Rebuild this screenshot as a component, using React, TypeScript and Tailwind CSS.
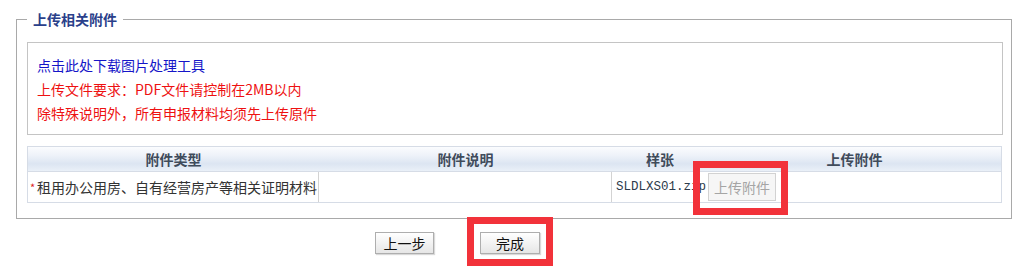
import React from "react";

export default function App() {
  const cjk = { fontFamily: '"Noto Sans CJK SC", "Liberation Sans", sans-serif' } as React.CSSProperties;
  return (
    <div className="relative w-[1022px] h-[277px] bg-white overflow-hidden" style={cjk}>
      <fieldset className="ml-[16px] mt-[9px] w-[996px] border border-[#a9a9a9] pl-[10px] pr-[8px] pt-[13px] pb-[15px]">
        <legend className="px-[6px] ml-[0px] text-[14px] leading-[20px] font-bold text-[#2a3f8a]">上传相关附件</legend>
        <div className="border border-[#c4c4c4] pl-[9px] pt-[10px] pb-[9px] text-[14px] leading-[24px]">
          <div className="text-[#1515c8]">点击此处下载图片处理工具</div>
          <div className="text-[#ee1111]">上传文件要求：PDF文件请控制在2MB以内</div>
          <div className="text-[#ee1111]">除特殊说明外，所有申报材料均须先上传原件</div>
        </div>
        <div className="mt-[11px] w-[975px] border border-[#d6dce6]">
          <div className="flex h-[24px] items-center text-[14px] font-bold text-[#3f4b5b] bg-[linear-gradient(to_bottom,#fbfcfe_0%,#eef2f9_35%,#dce5f2_70%,#eaf0f8_100%)]">
            <div className="w-[291px] text-center">附件类型</div>
            <div className="w-[293px] text-center">附件说明</div>
            <div className="w-[96px] text-center">样张</div>
            <div className="flex-1 text-center">上传附件</div>
          </div>
          <div className="flex h-[31px] border-t border-[#d6dce6] text-[14px] text-[#333]">
            <div className="w-[291px] flex items-center border-r border-[#d3d3d3]">
              <span className="text-[#d22] text-[11px] w-[8px] pl-[2px]">*</span>
              <span className="ml-[1px]">租用办公用房、自有经营房产等相关证明材料</span>
            </div>
            <div className="w-[293px] border-r border-[#d3d3d3]"></div>
            <div className="w-[96px] flex items-center pl-[4px] overflow-visible whitespace-nowrap">
              <span className="text-[12.5px] text-[#2d3a4a]" style={{ fontFamily: '"Liberation Mono", monospace' }}>SLDLXS01.zip</span>
            </div>
            <div className="flex-1 flex items-center relative">
              <button className="relative z-10 h-[28px] w-[68px] border border-[#d2d2d2] bg-[#f6f6f6] text-[14px] text-[#a5a5a5]">上传附件</button>
            </div>
          </div>
        </div>
      </fieldset>
      <div className="flex pl-[375px] gap-[46px] mt-[13px]">
        <button className="h-[22px] w-[59px] border border-[#aeaeae] bg-[linear-gradient(to_bottom,#ffffff,#e6e6e6)] text-[14px] text-[#111] shadow-[1px_1px_1px_rgba(0,0,0,0.15)]">上一步</button>
        <button className="h-[22px] w-[60px] border border-[#aeaeae] bg-[linear-gradient(to_bottom,#ffffff,#e6e6e6)] text-[14px] text-[#111] shadow-[1px_1px_1px_rgba(0,0,0,0.15)]">完成</button>
      </div>
      <div className="absolute left-[693px] top-[161px] w-[95px] h-[54px] border-[7px] border-[#f2323a] z-20 pointer-events-none"></div>
      <div className="absolute left-[467px] top-[217px] w-[86px] h-[49px] border-[7px] border-[#f2323a] z-20 pointer-events-none"></div>
    </div>
  );
}
